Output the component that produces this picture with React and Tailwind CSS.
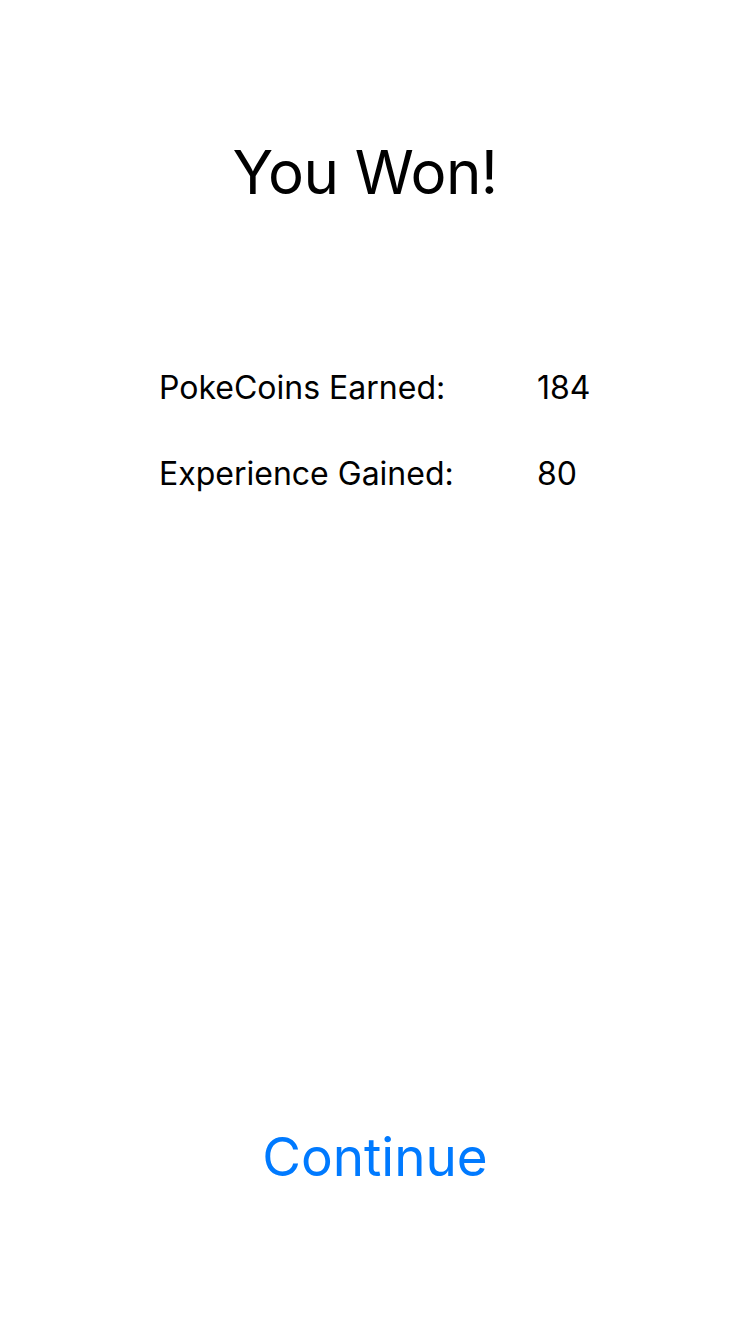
import React from 'react';

const rewards = [
  { label: 'PokeCoins Earned:', value: 184 },
  { label: 'Experience Gained:', value: 80 },
];

const App = () => {
  return (
    <div
      className="w-[750px] h-[1334px] bg-white flex flex-col items-center text-black"
      style={{ fontFamily: 'Inter, "Noto Sans", sans-serif' }}
    >
      {/* Title */}
      <h1 className="mt-[128px] mr-[20px] text-[60px] leading-[88px] font-normal tracking-[-0.5px]">You Won!</h1>

      {/* Rewards */}
      <div className="mt-[151px] w-full pl-[159px] flex flex-col gap-[45px]">
        {rewards.map((r) => (
          <div key={r.label} className="flex items-center text-[32px] leading-[41px]">
            <span className="w-[378px]">{r.label}</span>
            <span>{r.value}</span>
          </div>
        ))}
      </div>

      <div className="flex-1" />

      {/* Continue button */}
      <button className="mb-[141px] text-[53px] leading-[72px] text-[#007aff]">Continue</button>
    </div>
  );
};

export default App;
